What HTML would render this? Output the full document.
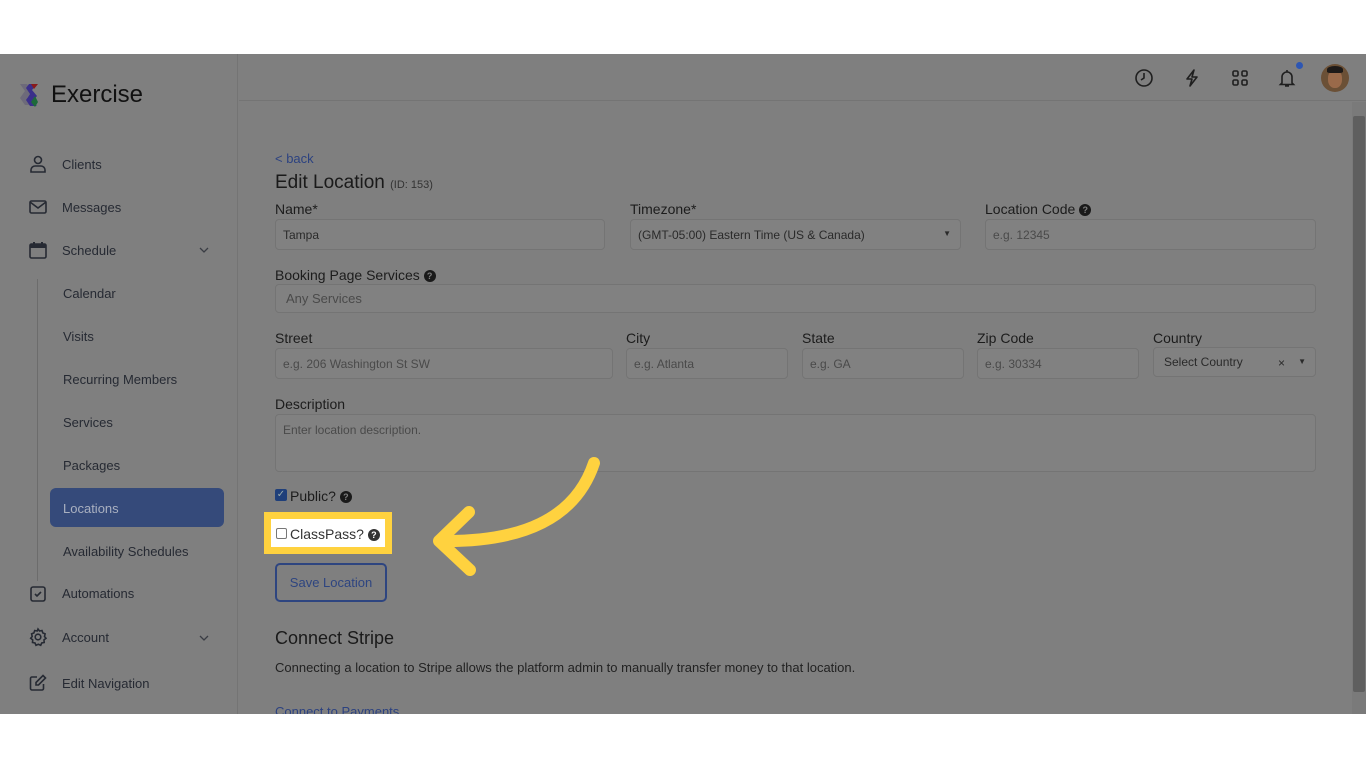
<!DOCTYPE html>
<html><head><meta charset="utf-8"><style>
*{box-sizing:border-box;margin:0;padding:0}
body{width:1366px;height:768px;background:#fff;position:relative;overflow:hidden;font-family:"Liberation Sans",sans-serif;color:#1c1c1c}
#app{position:absolute;left:0;top:54px;width:1366px;height:660px;background:#7f7f7f;overflow:hidden}
.side{position:absolute;left:0;top:0;width:238px;height:660px;border-right:1px solid #747474}
.a{position:absolute}
.nav{position:absolute;left:62px;font-size:13px;color:#262a33}
.ic{position:absolute;left:28px;width:20px;height:20px}
.hdr{position:absolute;left:239px;top:0;right:0;height:47px;border-bottom:1px solid #747474}
.lbl{position:absolute;font-size:14px;color:#1c1c1c}
.inp{position:absolute;height:31px;border:1px solid #747474;border-radius:4px;background:#818181;font-size:12px;color:#2a2a2a;padding:8px 7px}
.ph{color:#4a4a4a}
.q{display:inline-block;width:12px;height:12px;border-radius:50%;background:#1a1a1a;color:#7f7f7f;font-size:9px;font-weight:bold;text-align:center;line-height:12px;vertical-align:1px}
</style></head><body>
<div id="app">
<div class="side">
  <svg class="a" style="left:17px;top:28px" width="26" height="26" viewBox="0 0 26 26">
    <path d="M3 2h7l5 7-5 7 5 7H8l-5-7 5-7z" fill="#6d6a7a"/>
    <path d="M12 2h8l-5 6 5 6-5 6 5 4h-7l-4-6 4-6-4-6z" fill="#3a2f8a"/>
    <path d="M14 2h7l-4 5z" fill="#8a1a1a"/><path d="M14 20l4-6 3 6-3 5z" fill="#1e6a3a"/>
  </svg>
  <div class="a" style="left:51px;top:27px;font-size:24px;color:#111">Exercise</div>
  <svg class="ic" style="top:100px" viewBox="0 0 20 20" fill="none" stroke="#262a33" stroke-width="1.6"><circle cx="10" cy="6" r="3.5"/><path d="M3 18v-2a4 4 0 0 1 4-4h6a4 4 0 0 1 4 4v2z"/></svg>
  <div class="nav" style="top:103px">Clients</div>
  <svg class="ic" style="top:143px" viewBox="0 0 20 20" fill="none" stroke="#262a33" stroke-width="1.6"><rect x="2" y="4" width="16" height="12" rx="1.5"/><path d="M2 5l8 6 8-6"/></svg>
  <div class="nav" style="top:146px">Messages</div>
  <svg class="ic" style="top:186px" viewBox="0 0 20 20" fill="#262a33"><rect x="2" y="4" width="16" height="14" rx="1.5" fill="none" stroke="#262a33" stroke-width="1.6"/><rect x="2" y="4" width="16" height="4"/><rect x="5" y="2" width="2" height="4"/><rect x="13" y="2" width="2" height="4"/></svg>
  <div class="nav" style="top:189px">Schedule</div>
  <svg class="a" style="left:198px;top:192px" width="12" height="8" viewBox="0 0 12 8"><path d="M2 2l4 4 4-4" fill="none" stroke="#3a3d44" stroke-width="1.3"/></svg>
  <div class="a" style="left:37px;top:225px;width:1px;height:302px;background:#6c6c6c"></div>
  <div class="nav" style="left:63px;top:232px">Calendar</div>
  <div class="nav" style="left:63px;top:275px">Visits</div>
  <div class="nav" style="left:63px;top:318px">Recurring Members</div>
  <div class="nav" style="left:63px;top:361px">Services</div>
  <div class="nav" style="left:63px;top:404px">Packages</div>
  <div class="a" style="left:50px;top:434px;width:174px;height:39px;background:#354a7a;border-radius:6px"></div>
  <div class="nav" style="left:63px;top:447px;color:#a9b0c0">Locations</div>
  <div class="nav" style="left:63px;top:490px">Availability Schedules</div>
  <svg class="ic" style="top:530px" viewBox="0 0 20 20" fill="none" stroke="#262a33" stroke-width="1.6"><rect x="3" y="3" width="14" height="14" rx="2"/><path d="M7 10l2 2 4-4"/></svg>
  <div class="nav" style="top:532px">Automations</div>
  <svg class="ic" style="top:573px" viewBox="0 0 20 20" fill="none" stroke="#262a33" stroke-width="1.6"><circle cx="10" cy="10" r="2.8"/><path d="M10 2l1.5 2 2.5-.5.8 2.4 2.3 1-.6 2.6 1.5 1.8-2 1.6.2 2.6-2.5.5-1 2.3-2.4-1-2.3 1-1-2.3-2.5-.5.2-2.6-2-1.6 1.5-1.8-.6-2.6 2.3-1 .8-2.4 2.5.5z"/></svg>
  <div class="nav" style="top:576px">Account</div>
  <svg class="a" style="left:198px;top:580px" width="12" height="8" viewBox="0 0 12 8"><path d="M2 2l4 4 4-4" fill="none" stroke="#3a3d44" stroke-width="1.3"/></svg>
  <svg class="ic" style="top:619px" viewBox="0 0 20 20" fill="none" stroke="#262a33" stroke-width="1.6"><path d="M9 4H4a1.5 1.5 0 0 0-1.5 1.5v10A1.5 1.5 0 0 0 4 17h10a1.5 1.5 0 0 0 1.5-1.5V11"/><path d="M15 2.5l2.5 2.5-7 7H8V9.5z"/></svg>
  <div class="nav" style="top:622px">Edit Navigation</div>
</div>
<div class="hdr">
  <svg class="a" style="left:895px;top:14px" width="20" height="20" viewBox="0 0 20 20" fill="none" stroke="#1f1f1f" stroke-width="1.6"><circle cx="10" cy="10" r="8"/><path d="M10 5v5l-3 2"/></svg>
  <svg class="a" style="left:943px;top:14px" width="20" height="20" viewBox="0 0 20 20" fill="none" stroke="#1f1f1f" stroke-width="1.6" stroke-linejoin="round"><path d="M12 2L5 11h5l-2 7 7-9h-5z"/></svg>
  <svg class="a" style="left:991px;top:14px" width="20" height="20" viewBox="0 0 20 20" fill="none" stroke="#1f1f1f" stroke-width="1.6"><rect x="3" y="3" width="5" height="5" rx="1.3"/><rect x="12" y="3" width="5" height="5" rx="1.3"/><rect x="3" y="12" width="5" height="5" rx="1.3"/><rect x="12" y="12" width="5" height="5" rx="1.3"/></svg>
  <svg class="a" style="left:1038px;top:14px" width="20" height="20" viewBox="0 0 20 20" fill="none" stroke="#1f1f1f" stroke-width="1.6"><path d="M5 15V9a5 5 0 0 1 10 0v6l1.5 1.5h-13zM8 18h4M10 2v2"/></svg>
  <div class="a" style="left:1057px;top:8px;width:7px;height:7px;border-radius:50%;background:#2d56b3"></div>
  <div class="a" style="left:1082px;top:10px;width:28px;height:28px;border-radius:50%;background:#6b5036;overflow:hidden"><div style="position:absolute;left:7px;top:6px;width:14px;height:18px;border-radius:45%;background:#9a6a4a"></div><div style="position:absolute;left:6px;top:2px;width:16px;height:7px;border-radius:50% 50% 20% 20%;background:#1e1a18"></div></div>
</div>
<div class="a" style="left:1352px;top:48px;width:14px;height:612px;background:#7a7a7a"></div>
<div class="a" style="left:1353px;top:62px;width:12px;height:576px;background:#5f5f5f;border-radius:2px"></div>

<div class="a" style="left:275px;top:97px;font-size:13px;color:#2c4280">&lt; back</div>
<div class="a" style="left:275px;top:118px;font-size:19px;color:#1a1a1a">Edit Location <span style="font-size:11px;color:#333">(ID: 153)</span></div>

<div class="lbl" style="left:275px;top:147px">Name*</div>
<div class="inp" style="left:275px;top:165px;width:330px">Tampa</div>
<div class="lbl" style="left:630px;top:147px">Timezone*</div>
<div class="inp" style="left:630px;top:165px;width:331px">(GMT-05:00) Eastern Time (US &amp; Canada)<span style="position:absolute;right:9px;top:9px;font-size:8px">▼</span></div>
<div class="lbl" style="left:985px;top:147px">Location Code <span class="q">?</span></div>
<div class="inp ph" style="left:985px;top:165px;width:331px">e.g. 12345</div>

<div class="lbl" style="left:275px;top:213px">Booking Page Services <span class="q">?</span></div>
<div class="inp ph" style="left:275px;top:230px;width:1041px;height:29px;font-size:13px;padding:6px 10px">Any Services</div>

<div class="lbl" style="left:275px;top:276px">Street</div>
<div class="inp ph" style="left:275px;top:294px;width:338px">e.g. 206 Washington St SW</div>
<div class="lbl" style="left:626px;top:276px">City</div>
<div class="inp ph" style="left:626px;top:294px;width:162px">e.g. Atlanta</div>
<div class="lbl" style="left:802px;top:276px">State</div>
<div class="inp ph" style="left:802px;top:294px;width:162px">e.g. GA</div>
<div class="lbl" style="left:977px;top:276px">Zip Code</div>
<div class="inp ph" style="left:977px;top:294px;width:162px">e.g. 30334</div>
<div class="lbl" style="left:1153px;top:276px">Country</div>
<div class="inp" style="left:1153px;top:293px;width:163px;height:30px;font-size:12px;padding:7px 10px">Select Country<span style="position:absolute;right:30px;top:8px">×</span><span style="position:absolute;right:9px;top:9px;font-size:8px">▼</span></div>

<div class="lbl" style="left:275px;top:342px">Description</div>
<div class="inp ph" style="left:275px;top:360px;width:1041px;height:58px">Enter location description.</div>

<div class="a" style="left:275px;top:435px;width:12px;height:12px;background:#1f3f7a;border-radius:2px;color:#9aa;font-size:10px;line-height:12px;text-align:center">✓</div>
<div class="lbl" style="left:290px;top:434px">Public? <span class="q">?</span></div>

<div class="a" style="left:264px;top:458px;width:128px;height:42px;background:#ffd23f"></div>
<div class="a" style="left:271px;top:465px;width:114px;height:28px;background:#fff"></div>
<div class="a" style="left:276px;top:474px;width:11px;height:11px;border:1px solid #777;border-radius:2px;background:#fff"></div>
<div class="lbl" style="left:290px;top:472px;color:#333">ClassPass? <span class="q" style="background:#333;color:#fff">?</span></div>

<div class="a" style="left:275px;top:509px;width:112px;height:39px;border:2px solid #2e4580;border-radius:5px;font-size:13px;color:#2e4580;text-align:center;line-height:35px">Save Location</div>

<div class="a" style="left:275px;top:574px;font-size:18px;color:#1a1a1a">Connect Stripe</div>
<div class="a" style="left:275px;top:606px;font-size:13px;color:#222">Connecting a location to Stripe allows the platform admin to manually transfer money to that location.</div>
<div class="a" style="left:275px;top:650px;font-size:13px;color:#2c4280">Connect to Payments</div>

<svg class="a" style="left:0;top:0" width="1366" height="660" viewBox="0 54 1366 660">
  <path d="M594 463C575 520 520 542 442 541" fill="none" stroke="#ffd23f" stroke-width="12" stroke-linecap="round"/>
  <path d="M469 512L439 541L470 570" fill="none" stroke="#ffd23f" stroke-width="12" stroke-linecap="round" stroke-linejoin="round"/>
</svg>
</div>
</body></html>
